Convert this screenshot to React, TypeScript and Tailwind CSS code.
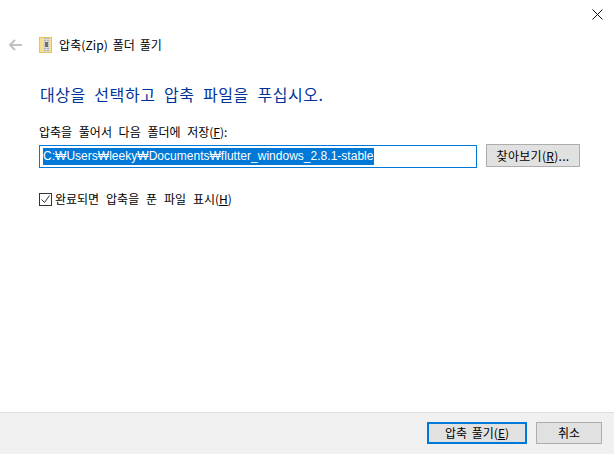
import React from 'react';

const font = { fontFamily: '"Noto Sans CJK KR", sans-serif' };

function Zip() {
  return (
    <svg width="13" height="16" viewBox="0 0 13 16" className="shrink-0">
      <rect x="0.5" y="0.5" width="12" height="15" fill="#f8df8f" stroke="#e8c35a" />
      <rect x="5" y="1" width="5" height="14" fill="#dcdcdc" />
      <path d="M6 1v14M9 1v14" stroke="#808080" strokeDasharray="1 1" />
      <rect x="6" y="5" width="3" height="5" fill="#6e6e6e" />
    </svg>
  );
}

function Btn({ children, className }: { children: React.ReactNode; className: string }) {
  return (
    <button className={`flex items-center justify-center bg-[#e1e1e1] text-[12px] text-black ${className}`}>
      {children}
    </button>
  );
}

export default function App() {
  return (
    <div style={font} className="w-[614px] h-[454px] flex flex-col bg-white text-[12px] text-black overflow-hidden">
      <div className="h-[412px] flex flex-col">
        <div className="h-[20px] flex justify-end pr-[11px] pt-[9px]">
          <svg width="11" height="11" viewBox="0 0 11 11" className="shrink-0">
            <path d="M0.5 0.5l10 10M10.5 0.5l-10 10" stroke="#111111" fill="none" />
          </svg>
        </div>
        <div className="flex items-center h-[24px] mt-[13px] pl-[9px]">
          <svg width="13" height="12" viewBox="0 0 13 12" className="shrink-0">
            <path d="M1 6h12M6 1L1 6l5 5" stroke="#c2c2c2" strokeWidth="2" fill="none" />
          </svg>
          <div className="ml-[17px] flex"><Zip /></div>
          <span className="ml-[7px] leading-[16px] [word-spacing:2px] tracking-[0.1px]">압축(Zip) 폴더 풀기</span>
        </div>
        <div className="pl-[40px] mt-[24px] h-[26px] text-[16px] leading-[26px] tracking-[0.55px] [word-spacing:4.4px] text-[#003399]">
          대상을 선택하고 압축 파일을 푸십시오.
        </div>
        <div className="pl-[39px] mt-[16px] h-[18px] leading-[18px] [word-spacing:4px]">
          압축을 풀어서 다음 폴더에 저장(<span className="underline">F</span>):
        </div>
        <div className="flex pl-[39px] mt-[3px] items-start">
          <div className="w-[438px] h-[23px] mt-[1px] border border-[#0078d7] flex items-center pl-[3px] overflow-hidden">
            <span style={{ fontFamily: '"Liberation Sans", sans-serif' }} className="bg-[#0078d7] text-white text-[12px] leading-[17px] h-[17px] whitespace-nowrap tracking-[0.02px]">
              C:₩Users₩leeky₩Documents₩flutter_windows_2.8.1-stable
            </span>
          </div>
          <Btn className="ml-[9px] w-[94px] h-[23px] border border-[#adadad]">
            <span className="tracking-[0.3px]">찾아보기(<span className="underline">R</span>)...</span>
          </Btn>
        </div>
        <div className="flex items-center pl-[39px] mt-[22px] h-[18px]">
          <div className="w-[13px] h-[13px] border border-[#333333] flex items-center justify-center shrink-0">
            <svg width="11" height="11" viewBox="0 0 11 11">
              <path d="M1.5 5.5l3 3 5-7" stroke="#333333" fill="none" />
            </svg>
          </div>
          <span className="ml-[3px] leading-[18px] [word-spacing:4.2px]">완료되면 압축을 푼 파일 표시(<span className="underline">H</span>)</span>
        </div>
      </div>
      <div className="flex-1 bg-[#f0f0f0] border-t border-[#dfdfdf] flex justify-end items-start pt-[9px] pr-[12px] gap-[9px]">
        <Btn className="w-[100px] h-[22px] border-2 border-[#0078d7] [word-spacing:2px]">
          압축 풀기(<span className="underline">E</span>)
        </Btn>
        <Btn className="w-[66px] h-[22px] border border-[#adadad]">취소</Btn>
      </div>
    </div>
  );
}
